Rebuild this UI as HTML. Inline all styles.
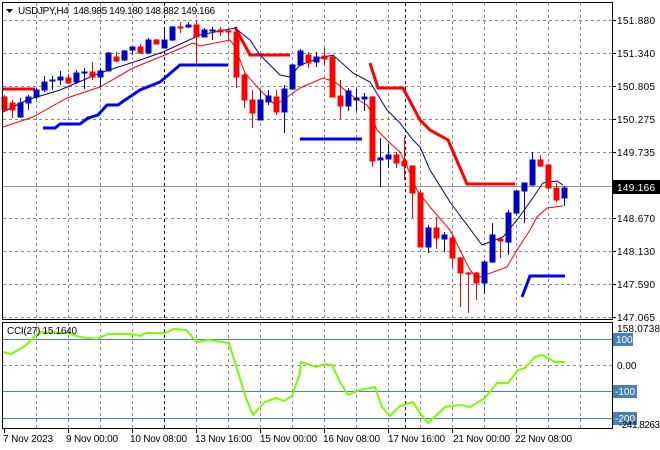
<!DOCTYPE html>
<html><head><meta charset="utf-8"><style>
html,body{margin:0;padding:0;background:#fff;}
svg{display:block;font-family:"Liberation Sans",sans-serif;font-size:10px;}
</style></head><body>
<svg width="660" height="450" viewBox="0 0 660 450" xmlns="http://www.w3.org/2000/svg">
<rect width="660" height="450" fill="#fff"/>
<g stroke="#8a8a8a" stroke-dasharray="3,3" stroke-width="1" fill="none">
<path d="M3 20.5H612M3 53.5H612M3 86.5H612M3 119.5H612M3 152.5H612M3 218.5H612M3 251.5H612M3 284.5H612M3 317.5H612"/>
<path d="M36.5 3V319M68.5 3V319M100.5 3V319M132.5 3V319M196.5 3V319M228.5 3V319M260.5 3V319M292.5 3V319M324.5 3V319M356.5 3V319M388.5 3V319M420.5 3V319M452.5 3V319M484.5 3V319M516.5 3V319M548.5 3V319M580.5 3V319"/>
<path d="M36.5 323V428M68.5 323V428M100.5 323V428M132.5 323V428M196.5 323V428M228.5 323V428M260.5 323V428M292.5 323V428M324.5 323V428M356.5 323V428M388.5 323V428M420.5 323V428M452.5 323V428M484.5 323V428M516.5 323V428M548.5 323V428M580.5 323V428"/>
<path d="M3 365.5H612"/>
</g>
<g stroke="#000" stroke-dasharray="3,3" fill="none">
<path d="M164.5 3V319M405.5 3V319M164.5 323V428M405.5 323V428"/>
</g>
<path d="M3 186.5H612" stroke="#8c96a0" stroke-width="1"/>
<path d="M3 339.5H612M3 391.5H612M3 418.5H612" stroke="#4682b4" stroke-width="1"/>
<polyline fill="none" stroke="#ff0000" stroke-width="3" points="3,89 35,89"/>
<polyline fill="none" stroke="#ff0000" stroke-width="3" points="235,27 250,55 290,55"/>
<polyline fill="none" stroke="#ff0000" stroke-width="3" points="370,63 378,88 403,88 420,120 430,130 448,140 467,184 515,184"/>
<polyline fill="none" stroke="#0000ff" stroke-width="3" points="43,128 55,128 60,124 80,124 88,118 98,115 107,105 118,105 125,100 140,90 160,82 180,65 228,65"/>
<polyline fill="none" stroke="#0000ff" stroke-width="3" points="300,139 362,139"/>
<polyline fill="none" stroke="#0000ff" stroke-width="3" points="522,297 530,276 565,276"/>
<polyline fill="none" stroke="#000080" stroke-width="1" points="3,112 27,100 60,90 100,73 140,60 163,52 200,35 235,28 250,40 260,55 280,75 290,77 300,65 320,58 333,55 353,73 370,82 387,110 400,123 413,140 420,147 430,170 450,202 482,245 503,237 517,220 530,202 543,183 557,181 563,185"/>
<polyline fill="none" stroke="#ff0000" stroke-width="1" points="3,127 33,117 67,98 100,87 133,68 165,55 193,43 200,46 230,40 235,47 245,73 260,90 275,105 283,100 300,88 323,78 335,82 355,98 367,105 370,110 377,130 390,143 400,152 410,173 417,190 430,207 450,230 470,270 477,278 507,267 517,250 530,230 537,217 547,208 563,206"/>
<g stroke-width="1">
<g stroke="#ff0000" fill="#ff0000">
<path d="M4.5 95V112M12.5 100V118M68.5 74V84M92.5 62V80M116.5 52V62M140.5 44V54M156.5 39V44M180.5 22V33M196.5 20V65M220.5 27V36M228.5 28V40M236.5 27V88M244.5 73V108M252.5 90V128M276.5 90V115M308.5 52V68M324.5 48V66M332.5 55V97M340.5 80V119M372.5 96V167M396.5 152V168M404.5 137V180M412.5 165V218M420.5 190V247M436.5 217V249M452.5 235V268M460.5 257V307M468.5 272V313M476.5 272V300M500.5 237V258M540.5 155V167M548.5 164V189M556.5 183V202"/>
<rect x="2" y="97" width="5" height="13"/><rect x="10" y="103" width="5" height="7"/><rect x="66" y="78" width="5" height="5"/><rect x="90" y="72" width="5" height="5"/><rect x="114" y="57" width="5" height="4"/><rect x="138" y="47" width="5" height="6"/><rect x="154" y="40" width="5" height="4"/><rect x="178" y="27" width="5" height="1"/><rect x="194" y="25" width="5" height="12"/><rect x="218" y="30" width="5" height="2"/><rect x="226" y="31" width="5" height="1"/><rect x="234" y="32" width="5" height="45"/><rect x="242" y="75" width="5" height="25"/><rect x="250" y="100" width="5" height="13"/><rect x="274" y="97" width="5" height="15"/><rect x="306" y="55" width="5" height="8"/><rect x="322" y="56" width="5" height="3"/><rect x="330" y="57" width="5" height="40"/><rect x="338" y="96" width="5" height="10"/><rect x="370" y="97" width="5" height="64"/><rect x="394" y="155" width="5" height="8"/><rect x="402" y="161" width="5" height="5"/><rect x="410" y="166" width="5" height="27"/><rect x="418" y="193" width="5" height="54"/><rect x="434" y="228" width="5" height="10"/><rect x="450" y="238" width="5" height="20"/><rect x="458" y="258" width="5" height="15"/><rect x="466" y="273" width="5" height="1"/><rect x="474" y="273" width="5" height="10"/><rect x="498" y="239" width="5" height="2"/><rect x="538" y="160" width="5" height="6"/><rect x="546" y="165" width="5" height="23"/><rect x="554" y="188" width="5" height="12"/>
</g>
<g stroke="#0000c0" fill="#0000c0">
<path d="M20.5 98V118M28.5 95V110M36.5 88V99M44.5 76V92M52.5 76V90M60.5 71V85M76.5 70V84M84.5 68V89M100.5 68V87M108.5 52V71M124.5 50V61M132.5 46V55M148.5 38V54M164.5 30V48M172.5 26V41M188.5 22V28M204.5 28V37M212.5 27V40M260.5 90V120M268.5 90V105M284.5 85V133M292.5 64V90M300.5 49V66M316.5 52V67M348.5 88V111M356.5 89V111M364.5 93V111M380.5 138V187M388.5 144V168M428.5 225V253M444.5 232V252M484.5 260V294M492.5 223V263M508.5 210V255M516.5 190V215M524.5 183V223M532.5 152V186M564.5 186V206"/>
<rect x="18" y="103" width="5" height="14"/><rect x="26" y="97" width="5" height="6"/><rect x="34" y="90" width="5" height="7"/><rect x="42" y="82" width="5" height="8"/><rect x="50" y="80" width="5" height="1"/><rect x="58" y="77" width="5" height="3"/><rect x="74" y="73" width="5" height="9"/><rect x="82" y="72" width="5" height="1"/><rect x="98" y="71" width="5" height="6"/><rect x="106" y="53" width="5" height="18"/><rect x="122" y="51" width="5" height="9"/><rect x="130" y="47" width="5" height="3"/><rect x="146" y="40" width="5" height="13"/><rect x="162" y="40" width="5" height="8"/><rect x="170" y="27" width="5" height="13"/><rect x="186" y="25" width="5" height="2"/><rect x="202" y="30" width="5" height="7"/><rect x="210" y="30" width="5" height="1"/><rect x="258" y="100" width="5" height="20"/><rect x="266" y="96" width="5" height="6"/><rect x="282" y="89" width="5" height="23"/><rect x="290" y="65" width="5" height="24"/><rect x="298" y="51" width="5" height="14"/><rect x="314" y="57" width="5" height="5"/><rect x="346" y="91" width="5" height="15"/><rect x="354" y="98" width="5" height="2"/><rect x="362" y="97" width="5" height="2"/><rect x="378" y="158" width="5" height="2"/><rect x="386" y="155" width="5" height="4"/><rect x="426" y="228" width="5" height="19"/><rect x="442" y="235" width="5" height="4"/><rect x="482" y="262" width="5" height="21"/><rect x="490" y="235" width="5" height="27"/><rect x="506" y="213" width="5" height="29"/><rect x="514" y="191" width="5" height="22"/><rect x="522" y="183" width="5" height="8"/><rect x="530" y="160" width="5" height="25"/><rect x="562" y="188" width="5" height="10"/>
</g>
</g>
<polyline fill="none" stroke="#7cfc00" stroke-width="2" points="3,352 11,354 25,346 36,335 42,332 68,333 80,337 97,339 108,334 131,334 140,336 146,333 165,333 174,329 186,330 197,342 208,340 229,343 246,398 253,415 265,402 276,398 284,401 292,396 300,373 301,362 316,367 325,364 332,365 340,382 348,395 360,390 375,387 382,407 390,416 400,406 413,402 420,413 428,423 445,407 460,405 470,407 485,398 497,383 508,383 518,370 525,368 535,357 542,355 555,362 565,362"/>
<rect x="2.5" y="2.5" width="610" height="317" fill="none" stroke="#000"/>
<rect x="2.5" y="322.5" width="610" height="106" fill="none" stroke="#000"/>
<g fill="#000">
<text x="617" y="24" textLength="38">151.880</text>
<text x="617" y="57" textLength="38">151.340</text>
<text x="617" y="90" textLength="38">150.805</text>
<text x="617" y="123" textLength="38">150.275</text>
<text x="617" y="156" textLength="38">149.735</text>
<text x="617" y="222" textLength="38">148.670</text>
<text x="617" y="255" textLength="38">148.130</text>
<text x="617" y="288" textLength="38">147.590</text>
<text x="617" y="321" textLength="38">147.065</text>
</g>
<g stroke="#000"><path d="M612 20.5H616M612 53.5H616M612 86.5H616M612 119.5H616M612 152.5H616M612 218.5H616M612 251.5H616M612 284.5H616M612 317.5H616"/></g>
<rect x="613" y="180" width="47" height="14" fill="#000"/>
<text x="617" y="191" fill="#fff" textLength="38">149.166</text>
<text x="617" y="332" textLength="43">158.0738</text>
<rect x="613" y="333" width="20" height="13" fill="#4682b4"/><text x="616" y="343" fill="#fff">100</text>
<text x="617" y="369">0.00</text>
<rect x="613" y="385" width="24" height="13" fill="#4682b4"/><text x="615" y="395" fill="#fff">-100</text>
<rect x="613" y="412" width="24" height="13" fill="#4682b4"/><text x="615" y="422" fill="#fff">-200</text>
<text x="619" y="428" fill="#000" textLength="41">-241.8263</text>
<path d="M6 9H13L9.5 13Z" fill="#000"/>
<text x="18" y="14" fill="#000" textLength="197" xml:space="preserve">USDJPY,H4  148.985 149.180 148.882 149.166</text>
<text x="7" y="334" fill="#000" textLength="70">CCI(27) 15.1640</text>
<g stroke="#000"><path d="M4.5 429V433M68.5 429V433M132.5 429V433M196.5 429V433M260.5 429V433M324.5 429V433M388.5 429V433M452.5 429V433M516.5 429V433"/></g>
<g fill="#000">
<text x="3" y="442" textLength="50">7 Nov 2023</text>
<text x="66" y="442" textLength="52">9 Nov 00:00</text>
<text x="130" y="442" textLength="57">10 Nov 08:00</text>
<text x="195" y="442" textLength="57">13 Nov 16:00</text>
<text x="260" y="442" textLength="57">15 Nov 00:00</text>
<text x="323" y="442" textLength="57">16 Nov 08:00</text>
<text x="388" y="442" textLength="57">17 Nov 16:00</text>
<text x="453" y="442" textLength="57">21 Nov 00:00</text>
<text x="515" y="442" textLength="57">22 Nov 08:00</text>
</g>
</svg>
</body></html>
